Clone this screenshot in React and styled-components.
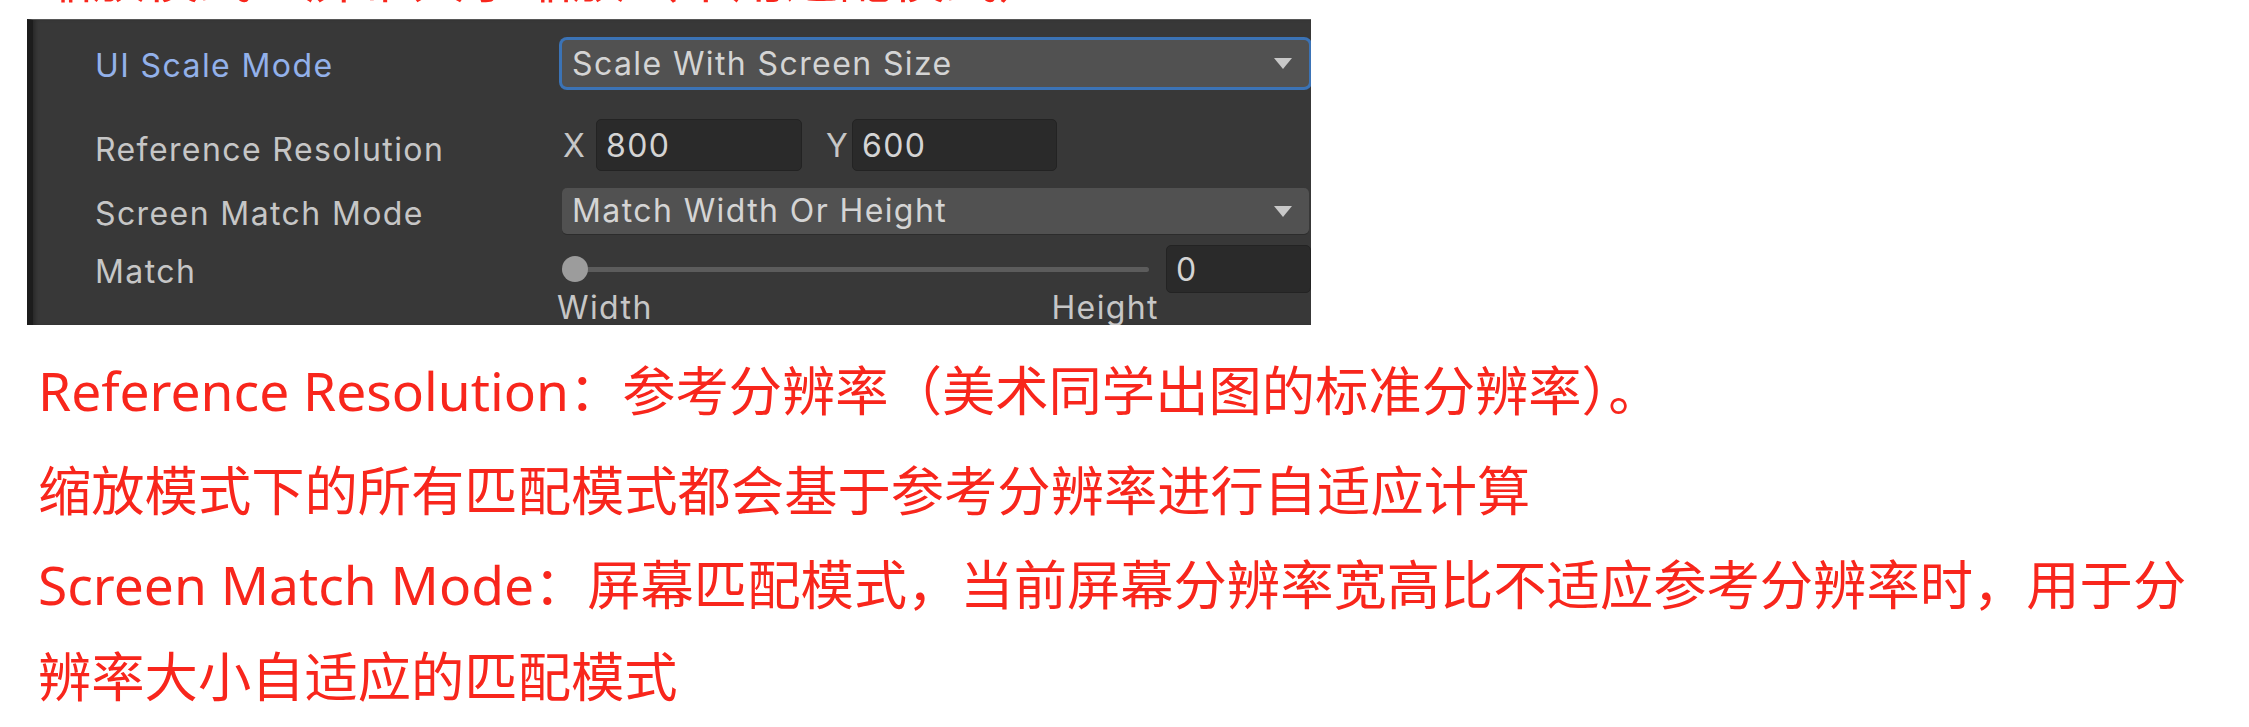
import React from "react";
import styled, { createGlobalStyle } from "styled-components";

const GlobalStyle = createGlobalStyle`
  html, body {
    margin: 0;
    padding: 0;
    background: #ffffff;
  }
  body {
    font-family: "Inter", "Noto Sans", sans-serif;
  }
`;

const Page = styled.div`
  width: 2249px;
  height: 727px;
  overflow: hidden;
  background: #ffffff;
`;

const CutCaption = styled.div`
  height: 19px;
  overflow: hidden;
  padding-left: 39px;
`;

const CutCaptionText = styled.div`
  margin-top: -50px;
  font-family: "Noto Sans", "Noto Sans CJK SC", sans-serif;
  font-size: 53.3px;
  line-height: 55px;
  color: #f8261c;
  white-space: nowrap;
`;

const Inspector = styled.section`
  margin-left: 27px;
  width: 1284px;
  height: 306px;
  box-sizing: border-box;
  background: #383838;
  border-top: 1px solid #575757;
  border-left: 6px solid #1c1c1c;
  box-shadow: inset 4px 0 4px -2px #262626;
  overflow: hidden;
  padding: 20px 0 0 62px;
  font-family: "Inter", sans-serif;
  font-size: 32px;
  letter-spacing: 1.4px;
  color: #c6c6c6;
`;

const Row = styled.div`
  display: grid;
  grid-template-columns: 467px 1fr;
  align-items: center;
  height: ${(p) => p.$h}px;
  margin-top: ${(p) => p.$gap || 0}px;
`;

const Label = styled.div`
  line-height: 32px;
  padding-top: ${(p) => p.$drop || 5}px;
  color: ${(p) => (p.$active ? "#93b1ea" : "#c6c6c6")};
  white-space: nowrap;
`;

const Dropdown = styled.div`
  height: 100%;
  margin-right: 2px;
  box-sizing: border-box;
  display: flex;
  align-items: center;
  justify-content: space-between;
  padding: 0 17px 0 10px;
  background: #515151;
  border-radius: 5px;
  box-shadow: ${(p) =>
    p.$focused ? "0 0 0 3px #3b73b6" : "0 1px 0 #2c2c2c"};
  color: #d4d4d4;
  line-height: 32px;
  white-space: nowrap;
`;

const Arrow = () => (
  <svg width="18" height="11" viewBox="0 0 18 11">
    <polygon points="0,0 18,0 9,11" fill="#c8c8c8" />
  </svg>
);

const Vector = styled.div`
  display: flex;
  align-items: center;
  height: 100%;
`;

const Axis = styled.span`
  width: ${(p) => p.$w}px;
  margin-left: ${(p) => p.$gap || 0}px;
  padding-left: 1px;
  box-sizing: border-box;
  color: #c6c6c6;
`;

const Field = styled.div`
  height: 100%;
  box-sizing: border-box;
  width: ${(p) => (p.$w ? `${p.$w}px` : "auto")};
  flex: ${(p) => (p.$w ? "none" : 1)};
  margin-left: ${(p) => p.$gap || 0}px;
  display: flex;
  align-items: center;
  padding-left: 9px;
  background: #2a2a2a;
  border: 1px solid #232323;
  border-radius: 5px;
  color: #d4d4d4;
`;

const SliderRow = styled.div`
  display: flex;
  align-items: center;
  height: 100%;
`;

const Track = styled.div`
  position: relative;
  width: 587px;
  height: 5px;
  border-radius: 3px;
  background: #5c5c5c;
`;

const Knob = styled.div`
  position: absolute;
  left: 0;
  top: -11px;
  width: 26px;
  height: 26px;
  border-radius: 50%;
  background: #9c9c9c;
`;

const SliderLabels = styled.div`
  grid-column: 2;
  display: flex;
  justify-content: space-between;
  width: 602px;
  margin-left: -5px;
  margin-top: -2px;
  line-height: 32px;
  color: #c6c6c6;
`;

const Notes = styled.div`
  padding: 14px 20px 0 38px;
  font-family: "Noto Sans", "Noto Sans CJK SC", sans-serif;
  font-size: 53.3px;
  color: #f8261c;
`;

const Note = styled.p`
  margin: 0;
  line-height: ${(p) => p.$lh || 96}px;
`;

export default function App() {
  return (
    <Page>
      <GlobalStyle />
      <CutCaption>
        <CutCaptionText>缩放模式：屏幕大小缩放（常用适配模式）</CutCaptionText>
      </CutCaption>

      <Inspector>
        <Row $h={47}>
          <Label $active $drop={4}>UI Scale Mode</Label>
          <Dropdown $focused>
            <span>Scale With Screen Size</span>
            <Arrow />
          </Dropdown>
        </Row>

        <Row $h={52} $gap={32}>
          <Label $drop={10}>Reference Resolution</Label>
          <Vector>
            <Axis $w={34}>X</Axis>
            <Field $w={206}>800</Field>
            <Axis $w={27} $gap={23}>Y</Axis>
            <Field $w={205}>600</Field>
          </Vector>
        </Row>

        <Row $h={46} $gap={17}>
          <Label>Screen Match Mode</Label>
          <Dropdown>
            <span>Match Width Or Height</span>
            <Arrow />
          </Dropdown>
        </Row>

        <Row $h={48} $gap={11}>
          <Label>Match</Label>
          <SliderRow>
            <Track>
              <Knob />
            </Track>
            <Field $gap={17}>0</Field>
          </SliderRow>
        </Row>

        <Row $h={32}>
          <SliderLabels>
            <span>Width</span>
            <span>Height</span>
          </SliderLabels>
        </Row>
      </Inspector>

      <Notes>
        <Note $lh={104}>Reference Resolution：参考分辨率（美术同学出图的标准分辨率）。</Note>
        <Note $lh={96}>缩放模式下的所有匹配模式都会基于参考分辨率进行自适应计算</Note>
        <Note $lh={92}>
          Screen Match Mode：屏幕匹配模式，当前屏幕分辨率宽高比不适应参考分辨率时，用于分辨率大小自适应的匹配模式
        </Note>
      </Notes>
    </Page>
  );
}
